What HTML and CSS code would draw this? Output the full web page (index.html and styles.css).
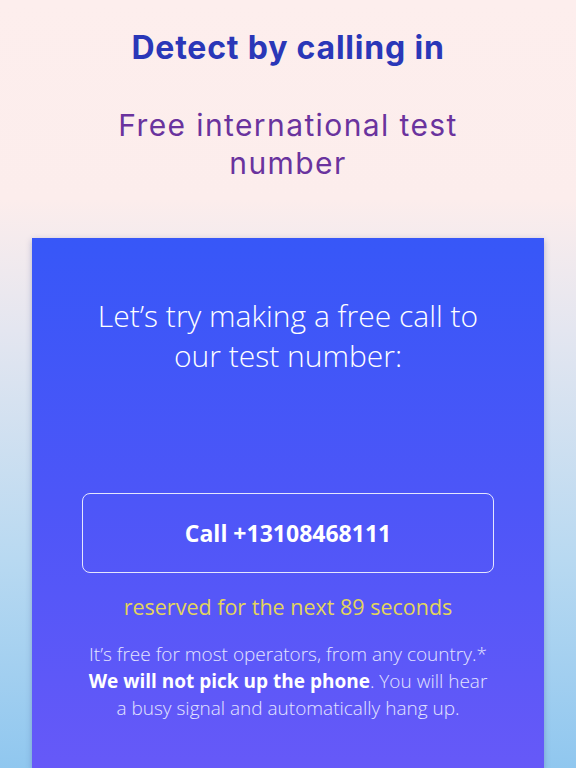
FILE: index.html
```html
<!DOCTYPE html>
<html lang="en">
<head>
<meta charset="utf-8">
<title>Detect by calling in</title>
<link rel="stylesheet" href="styles.css">
</head>
<body>
<div class="page">
  <header class="hero">
    <h1 class="title">Detect by calling in</h1>
    <p class="subtitle">Free international test<br>number</p>
  </header>
  <main class="card">
    <p class="lead">Let’s try making a free call to<br>our test number:</p>
    <button class="call-btn">Call +13108468111</button>
    <p class="reserved">reserved for the next 89 seconds</p>
    <p class="note">It’s free for most operators, from any country.*<br><strong>We will not pick up the phone</strong>. You will hear<br>a busy signal and automatically hang up.</p>
  </main>
</div>
</body>
</html>
```

FILE: styles.css
```css
* { box-sizing: border-box; }
html, body { margin: 0; padding: 0; }
body {
  width: 576px;
  height: 768px;
  overflow: hidden;
  background: linear-gradient(180deg, #fdeeed 0px, #fcedec 200px, #e4e6f0 330px, #b8d9f1 560px, #90c7ef 768px);
}
.page {
  display: flex;
  flex-direction: column;
  align-items: center;
  height: 768px;
}
.hero {
  text-align: center;
  padding-top: 28px;
  height: 238px;
}
.title {
  margin: 0;
  font-family: "Inter", "Noto Sans", sans-serif;
  font-weight: 700;
  font-size: 32px;
  line-height: 40px;
  color: #2a37b8;
  letter-spacing: 0.8px;
}
.subtitle {
  margin: 38px 0 0;
  font-family: "Inter", "Noto Sans", sans-serif;
  font-weight: 400;
  font-size: 30px;
  line-height: 38px;
  letter-spacing: 1.4px;
  color: #6a339e;
}
.card {
  width: 512px;
  flex: 1;
  background: linear-gradient(180deg, #3757f8 0%, #4d56f8 50%, #6659f8 100%);
  box-shadow: 0 2px 6px rgba(60, 70, 140, 0.35);
  display: flex;
  flex-direction: column;
  align-items: center;
  font-family: "Open Sans", sans-serif;
  color: #fff;
  text-align: center;
}
.lead {
  margin: 58px 0 0;
  font-weight: 300;
  font-size: 30px;
  line-height: 40px;
}
.call-btn {
  margin-top: 117px;
  width: 412px;
  height: 80px;
  background: transparent;
  border: 1.5px solid rgba(255,255,255,0.85);
  border-radius: 8px;
  font-family: "Open Sans", sans-serif;
  font-weight: 700;
  font-size: 23px;
  color: #fff;
}
.reserved {
  margin: 20px 0 0;
  font-size: 21.5px;
  line-height: 28px;
  color: #e3d55c;
}
.note {
  margin: 20px 0 0;
  font-weight: 300;
  font-size: 19px;
  line-height: 27px;
  color: #e3e4ff;
}
.note strong { font-weight: 700; color: #fff; }
```
